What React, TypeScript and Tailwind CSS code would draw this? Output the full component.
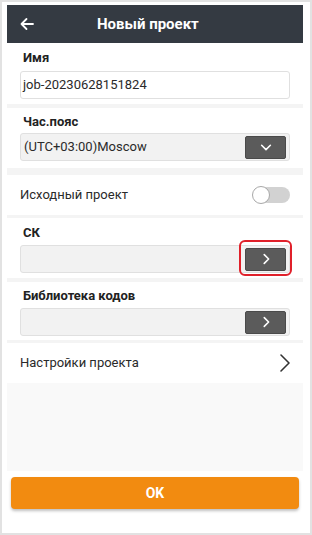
import { ReactNode } from "react";

const Chevron = ({ dir = "right", className = "" }: { dir?: "right" | "down"; className?: string }) => (
    <svg viewBox="0 0 16 16" className={className} fill="none" stroke="currentColor" strokeWidth="1.8" strokeLinecap="round" strokeLinejoin="round">
        {dir === "right" ? <path d="M6 3l5 5-5 5" /> : <path d="M3 6l5 5 5-5" />}
    </svg>
);

const Field = ({ label, children }: { label: string; children: ReactNode }) => (
    <div className="px-[13px]">
        <div className="ml-[3px] h-[16px] flex items-center text-[13px] font-bold text-[#222]">{label}</div>
        {children}
    </div>
);

const Band = ({ h }: { h: string }) => <div className={`${h} bg-[#f4f4f4]`} />;

const DarkButton = ({ dir }: { dir: "right" | "down" }) => (
    <div className="w-[41px] h-[23px] bg-[#5b5b5b] border border-[#4a4a4a] rounded-[2px] flex items-center justify-center text-white">
        <Chevron dir={dir} className="w-[14px] h-[14px]" />
    </div>
);

export default function App() {
    return (
        <div className="w-[312px] h-[535px] border-2 border-[#e2e2e2] bg-white pl-[5px] pr-[7px] pt-[3px] flex flex-col font-['Roboto','Liberation_Sans',sans-serif]">
            <div className="h-[38px] shrink-0 bg-[#343a42] flex items-center text-white">
                <svg viewBox="0 0 16 16" className="ml-[12px] w-[16px] h-[16px]" fill="none" stroke="currentColor" strokeWidth="1.8" strokeLinecap="round" strokeLinejoin="round">
                    <path d="M14 8H2.5M7.5 3L2.5 8l5 5" />
                </svg>
                <span className="ml-[62px] text-[15px] font-bold">Новый проект</span>
            </div>

            <div className="pt-[7px] pb-[5px]">
                <Field label="Имя">
                    <div className="mt-[5px] h-[28px] border border-[#e0e0e0] rounded-[3px] flex items-center pl-[2px] text-[13px] text-[#2a2a2a]">
                        job-20230628151824
                    </div>
                </Field>
            </div>
            <Band h="h-[4px]" />

            <div className="pt-[6px] pb-[7px]">
                <Field label="Час.пояс">
                    <div className="mt-[3px] h-[28px] border border-[#e0e0e0] rounded-[3px] bg-[#f2f2f2] flex items-center justify-between pl-[3px] pr-[3px] text-[13px] text-[#2a2a2a]">
                        <span>(UTC+03:00)Moscow</span>
                        <DarkButton dir="down" />
                    </div>
                </Field>
            </div>
            <Band h="h-[7px]" />

            <div className="h-[40px] shrink-0 flex items-center justify-between pl-[13px] pr-[13px]">
                <span className="text-[13px] text-[#2a2a2a]">Исходный проект</span>
                <div className="relative w-[38px] h-[18px]">
                    <div className="absolute inset-y-[1px] left-[4px] right-0 rounded-full bg-[#d2d2d2]" />
                    <div className="absolute left-0 top-0 w-[18px] h-[18px] rounded-full bg-white border border-[#a8a8a8]" />
                </div>
            </div>
            <Band h="h-[3px]" />

            <div className="pt-[7px] pb-[5px]">
                <Field label="СК">
                    <div className="mt-[4px] h-[28px] border border-[#e0e0e0] rounded-[3px] bg-[#f2f2f2] flex items-center justify-end pr-[3px]">
                        <div className="relative">
                            <DarkButton dir="right" />
                            <div className="absolute -left-[6px] -top-[8px] w-[53px] h-[36px] border-2 border-[#e0202a] rounded-[6px]" />
                        </div>
                    </div>
                </Field>
            </div>
            <Band h="h-[4px]" />

            <div className="pt-[6px] pb-[4px]">
                <Field label="Библиотека кодов">
                    <div className="mt-[4px] h-[28px] border border-[#e0e0e0] rounded-[3px] bg-[#f2f2f2] flex items-center justify-end pr-[3px]">
                        <DarkButton dir="right" />
                    </div>
                </Field>
            </div>
            <Band h="h-[3px]" />

            <div className="h-[40px] shrink-0 flex items-center justify-between pl-[13px] pr-[12px]">
                <span className="text-[13px] text-[#2a2a2a]">Настройки проекта</span>
                <svg viewBox="0 0 12 20" className="w-[12px] h-[20px] text-[#333]" fill="none" stroke="currentColor" strokeWidth="1.6" strokeLinecap="round" strokeLinejoin="round">
                    <path d="M2 2l8 8-8 8" />
                </svg>
            </div>

            <div className="h-[88px] shrink-0 bg-[#f9f9f9]" />

            <div className="pt-[6px] px-[4px]">
                <button className="w-full h-[32px] rounded-[4px] bg-[#f28b10] text-white text-[14px] font-bold shadow-[0_2px_3px_rgba(0,0,0,0.25)]">
                    OK
                </button>
            </div>
        </div>
    );
}
